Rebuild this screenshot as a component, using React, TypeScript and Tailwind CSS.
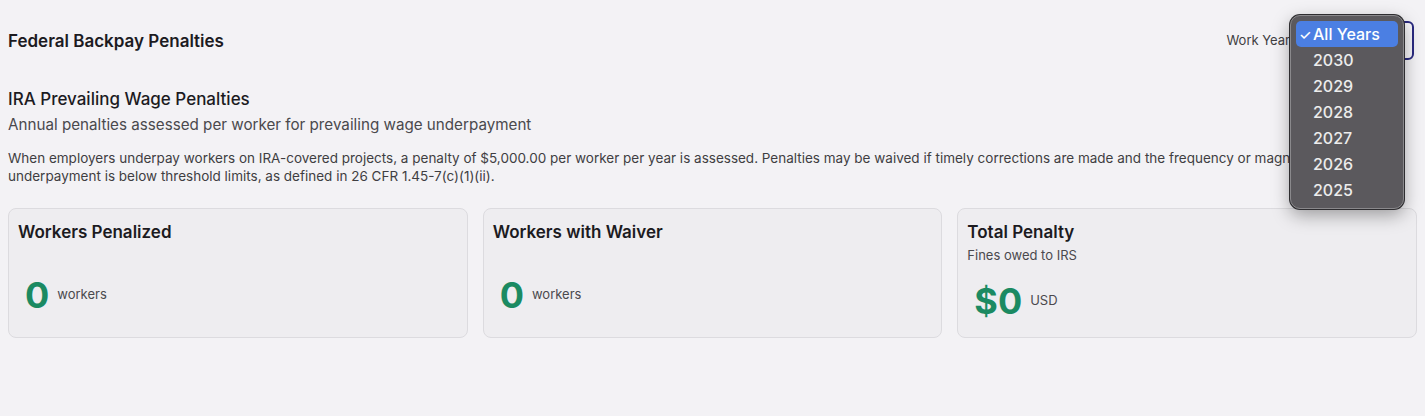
import { useState } from 'react';

const years = ['All Years', '2030', '2029', '2028', '2027', '2026', '2025'];

const StatCard = ({
  title,
  subtitle,
  value,
  unit,
}: {
  title: string;
  subtitle?: string;
  value: string;
  unit: string;
}) => (
  <div className="flex h-[130px] flex-col rounded-lg border border-[#dcdbdf] bg-[#eeedf0] px-[9px] pt-[11px]">
    <h4 className="text-[17px] font-semibold leading-6 text-[#1c1b1f]">{title}</h4>
    {subtitle && <p className="mt-[1px] text-[13px] leading-5 text-[#4a494d]">{subtitle}</p>}
    <div className={`flex items-center gap-2 px-[7px] ${subtitle ? 'mt-[14px]' : 'mt-[29px]'}`}>
      <span className="text-[36px] font-bold leading-[44px] text-[#1b8a62]">{value}</span>
      <span className="text-[13px] text-[#4a494d]">{unit}</span>
    </div>
  </div>
);

export default function App() {
  const [year] = useState('All Years');

  return (
    <div
      className="min-h-[416px] w-full bg-[#f3f2f5] px-2 text-[#1c1b1f]"
      style={{ fontFamily: 'Inter, "Noto Sans", sans-serif' }}
    >
      <div className="flex h-[87px] items-start justify-between pt-[21px]">
        <h2 className="pt-[8px] text-[17px] font-semibold leading-6">Federal Backpay Penalties</h2>
        <div className="mr-[3px] flex items-center">
          <label className="text-[13px] text-[#3f3e42]">Work Year</label>
          <div className="relative">
            <div className="h-[39px] w-[124px] rounded-md border-2 border-[#2a2a80] bg-[#f7f6f9]" />
            {/* native select popup */}
            <div className="absolute left-0 top-[-6px] z-10 w-[114px] rounded-[10px] border border-[#8a898c] bg-[#5b595d] p-[5px] shadow-[0_6px_18px_rgba(0,0,0,0.35)] ring-1 ring-[#2e2d30]">
              {years.map(y => (
                <div
                  key={y}
                  className={`flex h-[26px] items-center rounded-[5px] text-[16px] font-medium ${
                    y === year ? 'bg-[#4b7fe3] text-white' : 'text-[#ececec]'
                  }`}
                >
                  <span className="w-[17px] pl-[3px] text-[14px]">{y === year ? '✓' : ''}</span>
                  {y}
                </div>
              ))}
            </div>
          </div>
        </div>
      </div>

      <h3 className="text-[17px] font-medium leading-6">IRA Prevailing Wage Penalties</h3>
      <p className="mt-[2px] text-[15.2px] leading-6 text-[#4a494d]">
        Annual penalties assessed per worker for prevailing wage underpayment
      </p>
      <p className="mt-[12px] text-[13.5px] leading-[18px] text-[#3f3e42]">
        When employers underpay workers on IRA-covered projects, a penalty of $5,000.00 per worker per year is
        assessed. Penalties may be waived if timely corrections are made and the frequency or magnitude of the
        underpayment is below threshold limits, as defined in 26 CFR 1.45-7(c)(1)(ii).
      </p>

      <div className="mt-[23px] grid grid-cols-3 gap-[15px]">
        <StatCard title="Workers Penalized" value="0" unit="workers" />
        <StatCard title="Workers with Waiver" value="0" unit="workers" />
        <StatCard title="Total Penalty" subtitle="Fines owed to IRS" value="$0" unit="USD" />
      </div>
    </div>
  );
}
